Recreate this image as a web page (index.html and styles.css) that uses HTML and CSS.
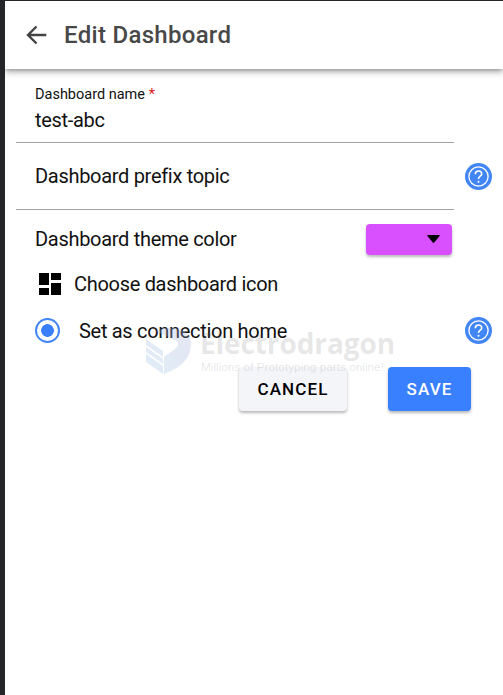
FILE: index.html
```html
<!DOCTYPE html>
<html lang="en">
<head>
<meta charset="utf-8">
<title>Edit Dashboard</title>
<link rel="stylesheet" href="styles.css">
</head>
<body>
<div class="screen">
  <header class="toolbar">
    <svg class="back" viewBox="0 0 22 20" width="22" height="20"><path d="M20.3 10H2.2M10.500 1.500L2 10l8.500 8.500"/></svg>
    <h1>Edit Dashboard</h1>
  </header>
  <main>
    <div class="row field-row name-row">
      <label class="field">
        <span class="caption">Dashboard name <span class="required">*</span></span>
        <span class="value">test-abc</span>
      </label>
    </div>
    <div class="row field-row prefix-row">
      <label class="field"><span class="label prefix">Dashboard prefix topic</span></label>
      <svg class="help" viewBox="0 0 27 27" width="27" height="27"><circle class="disc" cx="13.500" cy="13.500" r="13.500"/><circle class="ring" cx="13.500" cy="13.500" r="9.600"/><path class="mark" d="M10.300 11.200c0-4.300 6.400-4.300 6.400-.3 0 2.300-3.200 2.400-3.200 5.100"/><circle class="dot" cx="13.500" cy="18.700" r="1"/></svg>
    </div>
    <div class="row color-row">
      <span class="label theme">Dashboard theme color</span>
      <div class="color"><svg viewBox="0 0 13 8" width="13" height="8"><path d="M.8 0h11.400q1 0 .4 1L7.200 7.500q-.7.800-1.400 0L.4 1Q-.2 0 .8 0z"/></svg></div>
    </div>
    <div class="row icon-row">
      <svg class="tiles" viewBox="0 0 22 22" width="22" height="22"><path d="M0 0h10v12H0zM12 0h10v7H12zM0 15h10v7H0zM12 10h10v12H12z"/></svg>
      <span class="label choose">Choose dashboard icon</span>
    </div>
    <div class="row home-row">
      <span class="radio"></span>
      <span class="label home">Set as connection home</span>
      <svg class="help" viewBox="0 0 27 27" width="27" height="27"><circle class="disc" cx="13.500" cy="13.500" r="13.500"/><circle class="ring" cx="13.500" cy="13.500" r="9.600"/><path class="mark" d="M10.300 11.200c0-4.300 6.400-4.300 6.400-.3 0 2.300-3.200 2.400-3.200 5.100"/><circle class="dot" cx="13.500" cy="18.700" r="1"/></svg>
    </div>
    <div class="actions">
      <div class="button cancel">CANCEL</div>
      <div class="button save">SAVE</div>
    </div>
  </main>
  <div class="watermark">
    <svg viewBox="0 0 46 48" width="46" height="48">
      <defs><linearGradient id="brand" x1="0" y1="1" x2="1" y2="0"><stop offset="0" stop-color="#9cc4e8"/><stop offset="1" stop-color="#a8b0d8"/></linearGradient></defs>
      <path fill="url(#brand)" d="M0 12l17 12v6L0 18zM0 20l17 12v5L0 25zM0 27l17 12v8L0 35zM18 30l11-8c4-3 4-7 0-9L9 4C16 1 23 0 29 1c11 2 16 8 16 16 0 15-11 24-27 30z"/>
    </svg>
    <div class="brand">
      <div class="brand-name">Electrodragon</div>
      <div class="tagline">Millions of Prototyping parts online!</div>
    </div>
  </div>
</div>
</body>
</html>
```

FILE: styles.css
```css
* { box-sizing: border-box; }
body {
  margin: 0;
  background: #fff;
  color: #111;
  font-family: Roboto, "Liberation Sans", sans-serif;
}
svg { display: block; flex: none; }
.screen {
  position: relative;
  height: 695px;
  overflow: hidden;
  border-left: 5px solid #242528;
  border-top: 1px solid #242528;
}
.toolbar {
  display: flex;
  align-items: center;
  height: 68px;
  padding-left: 21px;
  gap: 16px;
  box-shadow: 0 2px 4px -1px rgba(0,0,0,.3), 0 4px 6px rgba(0,0,0,.16), 0 1px 10px rgba(0,0,0,.1);
}
.back { fill: none; stroke: #444; stroke-width: 2.4; }
h1 {
  margin: 0;
  color: #484848;
  font-size: 24px;
  font-weight: 500;
  letter-spacing: .3px;
  line-height: 28px;
}
.row { display: flex; align-items: center; padding-right: 11px; }
.field-row { padding-left: 11px; justify-content: space-between; }
.field {
  display: flex;
  flex-direction: column;
  width: 438px;
  height: 100%;
  padding-left: 19px;
  border-bottom: 1px solid #a3a3a3;
}
.name-row { height: 74px; }
.prefix-row { height: 67px; }
.prefix-row .field { justify-content: center; }
.caption { margin-top: 17px; font-size: 14.500px; line-height: 18px; }
.required { color: #d71920; }
.value { margin-top: 4px; font-size: 20px; line-height: 24px; letter-spacing: -.3px; }
.label { font-size: 20px; line-height: 24px; letter-spacing: -.3px; white-space: nowrap; }
.help .disc { fill: #4286f5; }
.help .ring { fill: none; stroke: #fff; stroke-width: 1.300; }
.help .mark { fill: none; stroke: #fff; stroke-width: 1.600; }
.help .dot { fill: #fff; }
.color-row {
  height: 58px;
  padding: 0 51px 0 30px;
  justify-content: space-between;
}
.color {
  display: flex;
  align-items: center;
  justify-content: flex-end;
  width: 86px;
  height: 31px;
  padding-right: 12px;
  border-radius: 4px;
  background: #d850ff;
  box-shadow: 0 2px 3px rgba(0,0,0,.28);
}
.icon-row { height: 31px; padding-left: 34px; gap: 13px; }
.home-row { height: 63px; padding-left: 30px; }
.radio {
  width: 25px;
  height: 25px;
  border: 2px solid #4286f5;
  border-radius: 50%;
  background: radial-gradient(circle, #3880ff 0 6px, #fff 6.700px);
}
.home { margin-left: 19px; margin-right: auto; }
.actions {
  display: flex;
  justify-content: flex-end;
  gap: 41px;
  padding: 5px 32px 0 0;
}
.button {
  height: 44px;
  border-radius: 4px;
  font-size: 17px;
  font-weight: 500;
  line-height: 44px;
  letter-spacing: 1.100px;
  text-align: center;
  box-shadow: 0 2px 3px rgba(0,0,0,.28);
}
.cancel { width: 108px; background: #f4f5f8; color: #000; }
.save { width: 83px; background: #3880ff; color: #fff; }
.watermark {
  position: absolute;
  left: 141px;
  top: 326px;
  display: flex;
  gap: 8px;
  pointer-events: none;
}
.watermark svg { opacity: .3; }
.brand { color: rgba(70,70,70,.14); white-space: nowrap; }
.brand-name {
  font-family: "Open Sans", sans-serif;
  font-size: 28px;
  font-weight: 700;
  line-height: 32px;
  letter-spacing: -.1px;
}
.tagline {
  padding-left: 1px;
  font-family: "Liberation Sans", sans-serif;
  font-size: 11.800px;
  line-height: 16px;
}
```
